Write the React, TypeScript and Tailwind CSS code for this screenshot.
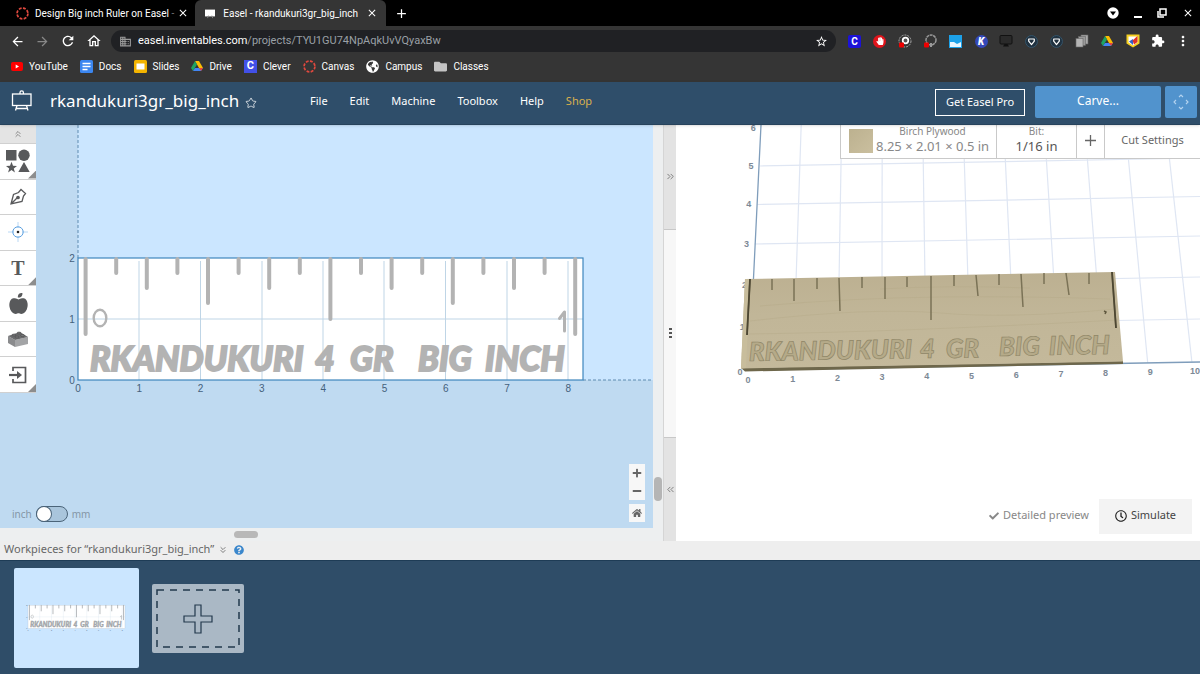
import React from 'react';
import { FaAppleAlt, FaHome, FaPlus, FaMinus, FaCheck, FaQuestionCircle, FaHandPaper, FaFolder, FaGlobeAmericas, FaRegClock } from 'react-icons/fa';
import { MdArrowBack, MdArrowForward, MdRefresh, MdOutlineHome, MdClose, MdAdd, MdMoreVert, MdExtension, MdBusiness, MdStarBorder } from 'react-icons/md';
import { ChevronsUp, ChevronsDown, ChevronsLeft, ChevronsRight, Star } from 'lucide-react';

const menuItems = ['File', 'Edit', 'Machine', 'Toolbox', 'Help'];

const tickEnds = [209, 148, 163, 148, 178, 148, 163, 148, 194, 148, 163, 148, 178, 148, 163, 148, 209];

// Same marks projected on the 3D board: x1, y1, x2, y2
const carvedTicks = [
  [750, 279, 747, 335], [772, 279, 772, 290], [794, 279, 794, 301], [817, 278, 817, 289],
  [839, 278, 840, 311], [862, 277, 862, 288], [885, 277, 885, 299], [907, 277, 907, 287],
  [931, 276, 931, 320], [954, 275, 954, 286], [976, 275, 978, 296], [999, 274, 999, 285],
  [1021, 274, 1023, 307], [1044, 273, 1044, 284], [1066, 273, 1069, 295], [1089, 273, 1089, 284],
  [1112, 272, 1116, 328],
];

const engraved = [
  { word: 'RKANDUKURI', x: 90, px: 749, py: 361 },
  { word: '4', x: 315, px: 920, py: 358 },
  { word: 'GR', x: 350, px: 946, py: 358 },
  { word: 'BIG', x: 418, px: 999, py: 356 },
  { word: 'INCH', x: 485, px: 1049, py: 355 },
];

const CanvasIcon = () => (
  <svg viewBox="0 0 12 12" className="size-[13px]" fill="none" stroke="#e0483e" strokeWidth="1.6">
    <circle cx="6" cy="6" r="5" strokeDasharray="2.6 1.3" />
  </svg>
);

const DriveIcon = () => (
  <svg viewBox="0 0 24 22" className="h-3 w-3">
    <path d="M8 1h8l8 14h-8z" fill="#fbbc04" />
    <path d="M8 1l4 7L4 21l-4-6z" fill="#1ea362" />
    <path d="M8 15h16l-4 6H4z" fill="#4285f4" />
    <path d="M16 15h8l-4 6z" fill="#ea4335" />
  </svg>
);

const EaselIcon = () => (
  <svg viewBox="0 0 22 22" className="size-[22px]" fill="none" stroke="white" strokeWidth="1.3">
    <rect x="1.5" y="4" width="18.5" height="11.5" />
    <path d="M9 4V2.5a1.7 1.7 0 0 1 3.4 0V4M6 15.5L4.5 20.5M15.5 15.5L17 20.5M5 18.5h11.5" />
  </svg>
);

const ShieldBadge = () => (
  <svg viewBox="0 0 14 14" className="size-[13px]">
    <circle cx="7" cy="7" r="6.4" fill="#20313f" stroke="#35566d" />
    <path d="M4 4.3h6v2.4L7 10.3 4 6.7z" fill="none" stroke="white" strokeWidth="1.3" strokeLinejoin="round" />
  </svg>
);

const extensions = [
  <span className="flex size-[13px] items-center justify-center rounded-xs bg-[#1c12d8] text-[10px] font-bold">C</span>,
  <span className="flex size-[13px] items-center justify-center rounded-full bg-[#e0141b]"><FaHandPaper size={8} /></span>,
  <svg viewBox="0 0 14 14" className="size-[14px]">
    <circle cx="7" cy="7" r="6" fill="none" stroke="#aaa" strokeDasharray="2 1" />
    <circle cx="7.5" cy="6.5" r="2.8" fill="#555" stroke="white" strokeWidth="1.7" />
    <rect x="1" y="8.5" width="5" height="5" rx="1" fill="#e00" />
  </svg>,
  <svg viewBox="0 0 14 14" className="size-[14px]">
    <circle cx="8" cy="6" r="5" fill="none" stroke="#999" strokeWidth="1.5" strokeDasharray="3 .6" />
    <path d="M8 9v4" stroke="#999" strokeWidth="2" />
    <rect x="1" y="8.5" width="5" height="5" rx="1" fill="#e00" />
  </svg>,
  <svg viewBox="0 0 13 13" className="size-[13px]">
    <path d="M0 0h13v13H0z" fill="#1da1e8" />
    <path d="M1 7h4l3 2 4-2v5H1z" fill="#e9f6ff" />
  </svg>,
  <span className="flex size-[13px] items-center justify-center rounded-full bg-[#3448b8] text-[10px] font-black italic">K</span>,
  <svg viewBox="0 0 14 14" className="size-[14px]">
    <rect x="1" y="1.5" width="12" height="8.5" rx="1" fill="#2a2a2a" stroke="#111" />
    <path d="M4 12.5h6L8.5 10h-3z" fill="#111" />
  </svg>,
  <ShieldBadge />,
  <ShieldBadge />,
  <svg viewBox="0 0 14 14" className="size-[14px]" stroke="#666" strokeWidth=".6">
    <rect x="6" y="1" width="7" height="9" fill="#aaa" />
    <rect x="3.5" y="2.5" width="7" height="9" fill="#999" />
    <rect x="1" y="4.5" width="7" height="8.5" fill="#b5b5b5" />
  </svg>,
  <DriveIcon />,
  <svg viewBox="0 0 14 14" className="size-[14px]">
    <path d="M.5.5h13v9L7 13.5.5 9.5z" fill="#f6d021" />
    <path d="M2.5 2.5h9v6L7 11.5 2.5 8.5z" fill="white" />
    <path d="M3 7.500l4-2.500v6z" fill="#2f62c9" />
    <path d="M11.5 2v6L8 10.500 6.500 6.500z" fill="#e03127" />
  </svg>,
  <MdExtension size={14} />,
  <MdMoreVert size={16} />,
];

const bookmarks = [
  { name: 'YouTube', icon: <svg viewBox="0 0 12 9" className="h-[9px] w-3"><rect width="12" height="9" rx="2" fill="#f00" /><path d="M4.7 2.5v4L8 4.5z" fill="white" /></svg> },
  { name: 'Docs', icon: <svg viewBox="0 0 13 13" className="size-[13px]"><rect width="13" height="13" rx="1.5" fill="#3b86f0" /><path d="M2.5 3.5h8M2.5 6.5h8M2.5 9.5h5" stroke="white" strokeWidth="1.4" /></svg> },
  { name: 'Slides', icon: <svg viewBox="0 0 13 13" className="size-[13px]"><rect width="13" height="13" rx="1.5" fill="#f4b400" /><rect x="2.5" y="3.5" width="8" height="6" fill="white" /></svg> },
  { name: 'Drive', icon: <DriveIcon /> },
  { name: 'Clever', icon: <span className="flex size-[13px] items-center justify-center bg-[#4250e8] text-[11px] font-bold">C</span> },
  { name: 'Canvas', icon: <CanvasIcon /> },
  { name: 'Campus', icon: <FaGlobeAmericas size={13} /> },
  { name: 'Classes', icon: <FaFolder size={13} className="text-[#c4c4c4]" /> },
];

const tools = [
  {
    label: 'Shapes', more: true, icon: (
      <svg viewBox="0 0 24 24" className="size-6" fill="#58595b">
        <path d="M0 1h10.5v10.5H0z" />
        <circle cx="18" cy="6.3" r="5.7" />
        <path d="M5.5 12.8l1.5 3.9 4 .2-3.2 2.5 1.1 4-3.4-2.3L2.1 23.4l1.1-4L0 16.9l4-.2zM18 13l5.7 10H12.3z" />
      </svg>
    ),
  },
  {
    label: 'Pen', more: false, icon: (
      <svg viewBox="0 0 18 18" className="size-[18px]" fill="none" stroke="#58595b" strokeWidth="1.3">
        <path d="M2 16L4.5 6.5 9.5 4.5 12 1.5l4.5 4L14.5 8l-1.5 5.5zM2 16L8 10" />
        <circle cx="9" cy="9.5" r="1.2" fill="#58595b" />
      </svg>
    ),
  },
  {
    label: 'Drill', more: false, icon: (
      <svg viewBox="0 0 20 20" className="size-5" fill="none" stroke="#5ba0e0">
        <path d="M10 0v6M10 14v6M0 10h6M14 10h6" stroke="#b9d8f5" />
        <circle cx="10" cy="10" r="5.2" />
        <circle cx="10" cy="10" r="1.3" fill="#222" stroke="none" />
      </svg>
    ),
  },
  { label: 'Text', more: true, icon: <span className="font-['Liberation_Serif',serif] text-[20px] font-bold text-[#58595b]">T</span> },
  { label: 'Icons', more: false, icon: <FaAppleAlt size={21} className="text-[#58595b]" /> },
  {
    label: 'Apps', more: false, icon: (
      <svg viewBox="0 0 20 16" className="h-4 w-5">
        <path d="M0 5l7 4v7l-7-4z" fill="#8a8b8d" />
        <path d="M7 9l13-3v7L7 16z" fill="#a3a4a6" />
        <path d="M0 5l12-4 8 5-13 3z" fill="#6a6b6d" />
        <g fill="#77787a" stroke="#444" strokeWidth=".5">
          <ellipse cx="6" cy="4" rx="2" ry="1" />
          <ellipse cx="11" cy="2" rx="2" ry="1" />
          <ellipse cx="9" cy="6" rx="2" ry="1" />
          <ellipse cx="14.5" cy="4.5" rx="2" ry="1" />
        </g>
      </svg>
    ),
  },
  {
    label: 'Import', more: true, icon: (
      <svg viewBox="0 0 18 18" className="size-[18px]" fill="none" stroke="#58595b" strokeWidth="1.7">
        <path d="M4 5V1.5h12.5v15H4V13" />
        <path d="M0 9h9" strokeWidth="2.2" />
        <path d="M8 5l5 4-5 4z" fill="#58595b" stroke="none" />
      </svg>
    ),
  },
];

const RulerBoard = ({ stroke, fill }: { stroke: string; fill: string }) => (
  <g>
    <rect x="78" y="133" width="505" height="122" fill="white" />
    <path d="M78 194H583M139 136V255M200.5 136V255M262 136V255M323 136V255M384 136V255M445.5 136V255M507 136V255M568 136V255" stroke="#bfd5e6" fill="none" />
    <rect x="78" y="133" width="505" height="122" fill="none" stroke={stroke} strokeWidth="1.2" />
    <g stroke={fill} strokeWidth="4" strokeLinecap="round">
      {tickEnds.map((end, i) => (
        <line key={i} x1={85.6 + i * 30.6} x2={85.6 + i * 30.6} y1={134} y2={end} />
      ))}
    </g>
    <ellipse cx="100" cy="193" rx="6.3" ry="8.3" fill="none" stroke={fill} strokeWidth="2.4" />
    <path d="M559.5 193.5L564.5 187V206" fill="none" stroke={fill} strokeWidth="3" strokeLinejoin="round" strokeLinecap="round" />
    <g fill={fill} stroke={fill} strokeWidth="1.8" className="font-['Lato',sans-serif] text-[34px] font-black italic">
      {engraved.map((e) => (
        <text key={e.word} x={e.x} y="246">{e.word}</text>
      ))}
    </g>
    <g fill="#44617c" textAnchor="middle" className="font-['Liberation_Sans',sans-serif] text-[10px]">
      {[0, 1, 2, 3, 4, 5, 6, 7, 8].map((n) => (
        <text key={n} x={78 + n * 61.3} y="267">{n}</text>
      ))}
      {[0, 1, 2].map((n) => (
        <text key={n} x="72" y={258.5 - n * 61}>{n}</text>
      ))}
    </g>
  </g>
);

const Preview3D = () => (
  <svg viewBox="676 125 524 416" preserveAspectRatio="xMinYMin slice" className="absolute inset-0 size-full">
    <defs>
      <linearGradient id="wood" x1="0" y1="0" x2="0" y2="1">
        <stop offset="0" stopColor="#bcb091" />
        <stop offset=".45" stopColor="#c1b698" />
        <stop offset="1" stopColor="#c4b99b" />
      </linearGradient>
    </defs>
    <g stroke="#dfe6f3" strokeWidth="1.2">
      {[1, 2, 3, 4, 5, 6, 7, 8, 9, 10, 11].map((i) => (
        <line key={i} x1={760.7 + 40.5 * i} y1="125" x2={749 + 44.3 * i} y2="363" />
      ))}
      {[166, 204.5, 244, 285, 327].map((y) => (
        <line key={y} x1={772 - y / 14} y1={y} x2="1200" y2={y - 8} />
      ))}
    </g>
    <path d="M761 125L749 370L1200 362" fill="none" stroke="#7f9dbb" strokeWidth="1.3" />
    <g fill="#7d8996" textAnchor="middle" className="font-['Liberation_Sans',sans-serif] text-[9px] font-bold">
      {[0, 1, 2, 3, 4, 5, 6, 7, 8, 9, 10].map((n) => (
        <text key={n} x={748 + n * 44.7} y={383 - n * 0.9}>{n}</text>
      ))}
      {[375, 330, 288, 247, 207, 169, 131].map((y, n) => (
        <text key={n} x={740 + n * 2.2} y={y}>{n}</text>
      ))}
    </g>
    <path d="M741 368L1123 361V364L745 371.5z" fill="#6e674b" />
    <path d="M745 279L1115 272L1123 361.5L741 368.5z" fill="url(#wood)" />
    <path d="M745 279L750 279L746 368L741 368.5z" fill="#c8bd9c" />
    <path d="M760 306q90-8 180-9t170 2M750 321q120-14 190-8t175-4M748 334q150-2 370-14M880 289q70-4 150-1" fill="none" stroke="#b3a784" strokeOpacity=".35" />
    <g stroke="#7a7256" strokeWidth="1.5">
      {carvedTicks.map(([x1, y1, x2, y2]) => (
        <line key={x1} x1={x1} y1={y1} x2={x2} y2={y2} />
      ))}
    </g>
    <path d="M750 279L747 335M1112 272L1116 328" stroke="#4d4733" strokeWidth="1.8" />
    <path d="M1104 311l2 1-1 2" fill="none" stroke="#5f583f" strokeWidth="1.5" />
    <g fill="#b5aa89" stroke="#8f8667" strokeWidth=".7" className="font-['Lato',sans-serif] text-[26px] font-black italic">
      {engraved.map((e) => (
        <text key={e.word} x={e.px} y={e.py} transform={`rotate(-1 ${e.px} ${e.py})`}>{e.word}</text>
      ))}
    </g>
  </svg>
);

const BrowserChrome = () => (
  <div className="bg-[#353535] font-['Roboto',sans-serif] text-white">
    {/* Tabs */}
    <div className="flex h-[26px] items-stretch bg-black text-[10px]">
      <div className="flex w-[195px] items-center pr-1.5 pl-4">
        <CanvasIcon />
        <span className="ml-1.5 flex-1 whitespace-nowrap">Design Big inch Ruler on Easel <span className="text-[#777]">-</span></span>
        <button aria-label="Close tab"><MdClose size={12} /></button>
      </div>
      <div className="flex w-[191px] items-center gap-2 rounded-t-md bg-[#353535] pr-2 pl-2.5">
        <svg viewBox="0 0 12 12" className="size-3"><path d="M0 2h12v8H0z" fill="white" /><path d="M3 12l1-3M9 12L8 9" stroke="#888" /></svg>
        <span className="flex-1 whitespace-nowrap">Easel - rkandukuri3gr_big_inch</span>
        <button aria-label="Close tab"><MdClose size={12} /></button>
      </div>
      <button aria-label="New tab" className="px-2"><MdAdd size={15} /></button>
      <div className="ml-auto flex items-center gap-[15px] pr-1.5">
        <svg viewBox="0 0 12 12" className="size-3"><circle cx="6" cy="6" r="5.7" fill="white" /><path d="M3 4.5h6L6 8.5z" fill="black" /></svg>
        <button aria-label="Minimize" className="h-2.5 w-2 border-b-2 border-white" />
        <button aria-label="Restore">
          <svg viewBox="0 0 10 10" className="size-2.5" fill="none" stroke="white" strokeWidth="1.5"><path d="M3 1h6v6H3zM1 3v6h6" /></svg>
        </button>
        <button aria-label="Close window"><MdClose size={12} /></button>
      </div>
    </div>
    {/* Address bar */}
    <div className="flex h-[30px] items-center">
      <div className="flex w-[111px] items-center gap-2.5 pl-2.5">
        <button aria-label="Back"><MdArrowBack size={15} /></button>
        <button aria-label="Forward" className="text-[#888]"><MdArrowForward size={15} /></button>
        <button aria-label="Reload"><MdRefresh size={16} /></button>
        <button aria-label="Home"><MdOutlineHome size={16} /></button>
      </div>
      <div className="flex h-[22px] flex-1 items-center gap-1.5 rounded-full bg-[#202124] px-2">
        <MdBusiness size={13} className="text-[#9a9a9a]" />
        <span className="flex-1 text-[11px] text-[#9aa0a6]"><span className="text-white">easel.inventables.com</span>/projects/TYU1GU74NpAqkUvVQyaxBw</span>
        <button aria-label="Bookmark"><MdStarBorder size={13} /></button>
      </div>
      <div className="flex w-[364px] pr-1 pl-1.5">
        {extensions.map((icon, i) => (
          <span key={i} className="flex flex-1 items-center justify-center">{icon}</span>
        ))}
      </div>
    </div>
    {/* Bookmarks */}
    <nav className="flex h-[26px] items-center gap-3 px-[11px] pb-1.5 text-[10px]">
      {bookmarks.map((b) => (
        <a key={b.name} href="#" className="flex items-center gap-1.5">{b.icon}{b.name}</a>
      ))}
    </nav>
  </div>
);

const Header = () => (
  <header className="relative z-10 flex h-[43px] items-center border-b border-[#27435c] bg-[#2f4e6a] pr-[3px] pb-0.5 text-[11px] text-white shadow-sm">
    <div className="flex w-[310px] items-center pb-0.5 pl-[11px]">
      <EaselIcon />
      <h1 className="ml-[17px] text-[17px]">rkandukuri3gr_big_inch</h1>
      <button aria-label="Favorite" className="mt-1 ml-1.5"><Star size={12} strokeWidth={1.5} /></button>
    </div>
    <nav className="flex gap-[22px] pb-0.5">
      {menuItems.map((item) => (
        <a key={item} href="#">{item}</a>
      ))}
      <a href="#" className="text-[#d9b04e]">Shop</a>
    </nav>
    <div className="ml-auto flex items-center gap-1">
      <button className="mr-1.5 h-[27px] w-[90px] border border-white">Get Easel Pro</button>
      <button className="h-8 w-[126px] rounded-xs bg-[#5193cd] pb-0.5 text-[12px]">Carve...</button>
      <button aria-label="Jog machine" className="flex size-8 items-center justify-center rounded-xs bg-[#5193cd]">
        <svg viewBox="0 0 16 16" className="size-4" fill="none" stroke="#b4d3ef" strokeWidth="1.1">
          <path d="M6 3l2-2 2 2M6 13l2 2 2-2M3 6L1 8l2 2M13 6l2 2-2 2" />
        </svg>
      </button>
    </div>
  </header>
);

const DesignPanel = () => (
  <section className="flex min-w-0 flex-[663] flex-col">
    <div className="flex flex-1">
      <div className="relative flex-1 overflow-hidden bg-[#bfdaf1]">
        <svg viewBox="0 0 653 403" preserveAspectRatio="xMinYMin slice" className="absolute inset-0 size-full">
          <path d="M78 0H653V255H78z" fill="#cbe6ff" />
          <path d="M78 0V133M583 255H653" stroke="#5f8bb0" strokeDasharray="3 2" />
          <RulerBoard stroke="#3f86bd" fill="#b3b3b3" />
        </svg>
        <div className="relative w-9 bg-[#d0d0d0]">
          <button aria-label="Collapse tools" className="flex h-[18px] w-full items-center justify-center bg-[#e4e4e4]">
            <ChevronsUp size={10} className="text-[#777]" />
          </button>
          <div className="grid h-[250px] grid-rows-7 gap-px py-px">
            {tools.map((tool) => (
              <button key={tool.label} aria-label={tool.label} className="relative flex items-center justify-center bg-white">
                {tool.icon}
                {tool.more && <span className="absolute right-0 bottom-0 size-2 bg-[#8d8d8d] [clip-path:polygon(100%_0,100%_100%,0_100%)]" />}
              </button>
            ))}
          </div>
        </div>
        <div className="absolute bottom-1.5 left-3 flex items-center gap-1 text-[10px] text-[#8496a6]">
          <label htmlFor="units">inch</label>
          <input id="units" type="checkbox" role="switch" className="h-4 w-8 appearance-none rounded-full border border-[#4b6479] bg-[#a9c5dc] before:block before:size-3.5 before:rounded-full before:bg-white before:ring-1 before:ring-[#4b6479]" />
          <label htmlFor="units">mm</label>
        </div>
        <div className="absolute right-2 bottom-1.5 flex w-4 flex-col text-[#666]">
          <button aria-label="Zoom in" className="flex h-[18px] items-center justify-center bg-[#f7f7f7]"><FaPlus size={10} /></button>
          <button aria-label="Zoom out" className="flex h-[18px] items-center justify-center bg-[#f7f7f7]"><FaMinus size={10} /></button>
          <button aria-label="Reset zoom" className="mt-1 flex h-[18px] items-center justify-center bg-[#f7f7f7]"><FaHome size={10} /></button>
        </div>
      </div>
      <div className="flex w-2.5 flex-col justify-end bg-[#edeff0] px-px pb-[27px]">
        <div className="h-6 rounded-full bg-[#b5b5b5]" />
      </div>
    </div>
    <div className="flex h-[13px] items-center bg-[#edeff0] pl-[234px]">
      <div className="h-[7px] w-6 rounded-full bg-[#b8b8b8]" />
    </div>
  </section>
);

const Divider = () => (
  <div className="flex w-[13px] flex-col border-l border-[#d5d5d5] bg-[#e3e3e3] text-[#777]">
    <button aria-label="Expand design" className="flex flex-1 items-center justify-center"><ChevronsRight size={11} /></button>
    <div className="flex flex-2 items-center justify-center border-y border-[#c8c8c8] bg-[#f7f7f7]">
      <svg viewBox="0 0 3 11" className="h-[11px] w-[3px]" fill="#555"><path d="M0 0h3v2H0zM0 4h3v2H0zM0 8h3v2H0z" /></svg>
    </div>
    <button aria-label="Expand preview" className="flex flex-1 items-center justify-center"><ChevronsLeft size={11} /></button>
  </div>
);

const PreviewPanel = () => (
  <section className="relative flex min-w-0 flex-[524] flex-col justify-between overflow-hidden bg-white">
    <Preview3D />
    <div className="relative flex h-[34px] self-end divide-x divide-[#c9c9c9] border-b border-l border-[#c9c9c9] bg-white text-[#666]">
      <button className="flex w-[156px] items-center gap-[3px] pb-0.5 pl-2">
        <span className="size-6 bg-linear-to-br from-[#bcb18f] to-[#cabf9f]" />
        <span className="flex flex-col items-center pb-0.5 whitespace-nowrap text-[#888]">
          <span className="text-[10px] leading-[13px]">Birch Plywood</span>
          <span className="text-[13px] leading-4">8.25 × 2.01 × 0.5 in</span>
        </span>
      </button>
      <button className="flex w-20 flex-col items-center justify-center pb-1">
        <span className="text-[10px] leading-[13px] text-[#888]">Bit:</span>
        <span className="text-[13px] leading-4 text-[#555]">1/16 in</span>
      </button>
      <button aria-label="Add bit" className="flex w-7 items-center justify-center pb-0.5">
        <svg viewBox="0 0 11 11" className="size-[11px]" stroke="#666" strokeWidth="1.3"><path d="M5.5 0v11M0 5.5h11" /></svg>
      </button>
      <button className="w-[95px] pb-0.5 text-[11px]">Cut Settings</button>
    </div>
    <div className="relative mr-2 mb-[7px] flex items-center gap-2.5 self-end text-[11px]">
      <button className="flex items-center gap-1 pb-0.5 text-[#888]"><FaCheck size={10} />Detailed preview</button>
      <button className="flex h-[35px] w-[93px] items-center justify-center gap-1 bg-[#f3f3f3] pb-0.5 text-[#444]"><FaRegClock size={12} className="text-[#222]" />Simulate</button>
    </div>
  </section>
);

const Workpieces = () => (
  <footer>
    <div className="flex h-[19px] items-center bg-[#eeeeee] px-1 pb-0.5 text-[11px] text-[#666]">
      <h2>Workpieces for “rkandukuri3gr_big_inch”</h2>
      <button aria-label="Collapse workpieces" className="ml-1"><ChevronsDown size={10} /></button>
      <button aria-label="Help" className="ml-1.5 text-[#3b87cc]"><FaQuestionCircle size={10} /></button>
    </div>
    <div className="flex items-center gap-[13px] border-t border-[#1e3c56] bg-[#2f4d68] px-3.5 pt-[7px] pb-1.5">
      <button aria-label="Workpiece 1" className="h-[100px] w-[125px] rounded-xs bg-[#cbe6ff]">
        <svg viewBox="5 -60 651 520" className="size-full">
          <RulerBoard stroke="#9aa9b5" fill="#a2a6aa" />
        </svg>
      </button>
      <button aria-label="Add workpiece" className="h-[69px] w-[92px] rounded-xs bg-[#aab8c5]">
        <svg viewBox="0 0 92 69" className="size-full" fill="none" stroke="#22384c">
          <rect x="5" y="6" width="82" height="57" strokeWidth="1.5" strokeDasharray="7 6" />
          <path d="M43 21h6v11h11v6H49v11h-6V38H32v-6h11z" strokeWidth="1.2" />
        </svg>
      </button>
    </div>
  </footer>
);

const App = () => {
  return (
    <div className="flex min-h-screen flex-col font-['Noto_Sans',sans-serif]">
      <BrowserChrome />
      <Header />
      <main className="flex flex-1">
        <DesignPanel />
        <Divider />
        <PreviewPanel />
      </main>
      <Workpieces />
    </div>
  );
};

export default App;
